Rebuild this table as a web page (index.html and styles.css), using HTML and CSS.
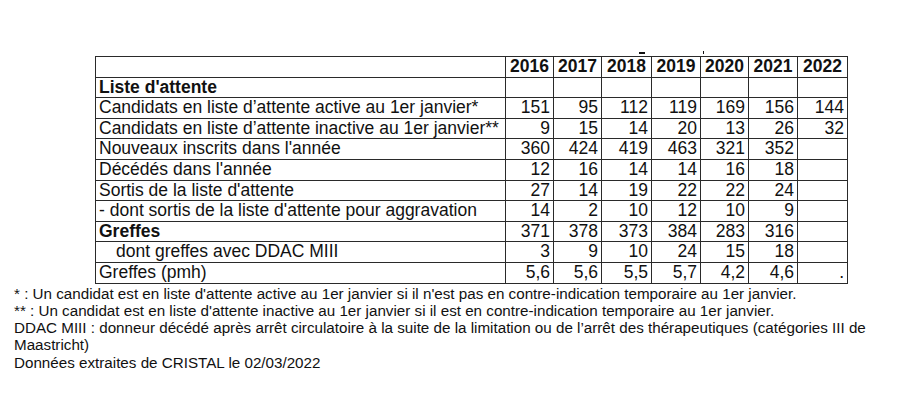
FILE: index.html
```html
<!DOCTYPE html>
<html lang="fr">
<head>
<meta charset="utf-8">
<link rel="stylesheet" href="styles.css">
</head>
<body>
<div class="page">
  <div class="table-wrap">
    <span class="mark mark-a"></span>
    <span class="mark mark-b"></span>
    <table class="data">
      <colgroup>
        <col class="c-label">
        <col class="c-y1"><col class="c-y2"><col class="c-y3"><col class="c-y4"><col class="c-y5"><col class="c-y6"><col class="c-y7">
      </colgroup>
      <tr class="head"><td></td><td>2016</td><td>2017</td><td>2018</td><td>2019</td><td>2020</td><td>2021</td><td>2022</td></tr>
      <tr class="section"><td>Liste d'attente</td><td></td><td></td><td></td><td></td><td></td><td></td><td></td></tr>
      <tr><td>Candidats en liste d’attente active au 1er janvier*</td><td>151</td><td>95</td><td>112</td><td>119</td><td>169</td><td>156</td><td>144</td></tr>
      <tr><td>Candidats en liste d’attente inactive au 1er janvier**</td><td>9</td><td>15</td><td>14</td><td>20</td><td>13</td><td>26</td><td>32</td></tr>
      <tr><td>Nouveaux inscrits dans l'année</td><td>360</td><td>424</td><td>419</td><td>463</td><td>321</td><td>352</td><td></td></tr>
      <tr><td>Décédés dans l'année</td><td>12</td><td>16</td><td>14</td><td>14</td><td>16</td><td>18</td><td></td></tr>
      <tr><td>Sortis de la liste d'attente</td><td>27</td><td>14</td><td>19</td><td>22</td><td>22</td><td>24</td><td></td></tr>
      <tr><td>- dont sortis de la liste d'attente pour aggravation</td><td>14</td><td>2</td><td>10</td><td>12</td><td>10</td><td>9</td><td></td></tr>
      <tr class="section"><td>Greffes</td><td>371</td><td>378</td><td>373</td><td>384</td><td>283</td><td>316</td><td></td></tr>
      <tr><td class="indent">dont greffes avec DDAC MIII</td><td>3</td><td>9</td><td>10</td><td>24</td><td>15</td><td>18</td><td></td></tr>
      <tr><td>Greffes (pmh)</td><td>5,6</td><td>5,6</td><td>5,5</td><td>5,7</td><td>4,2</td><td>4,6</td><td>.</td></tr>
    </table>
  </div>
  <div class="notes">
    <p>* : Un candidat est en liste d'attente active au 1er janvier si il n'est pas en contre-indication temporaire au 1er janvier.</p>
    <p>** : Un candidat est en liste d'attente inactive au 1er janvier si il est en contre-indication temporaire au 1er janvier.</p>
    <p>DDAC MIII : donneur décédé après arrêt circulatoire à la suite de la limitation ou de l’arrêt des thérapeutiques (catégories III de Maastricht)</p>
    <p>Données extraites de CRISTAL le 02/03/2022</p>
  </div>
</div>
</body>
</html>
```

FILE: styles.css
```css
html, body {
  margin: 0;
  padding: 0;
  background: #ffffff;
}
body {
  font-family: "Liberation Sans", Arial, sans-serif;
  color: #111111;
}
.page {
  padding: 56px 0 0 14px;
  width: 872px;
}
.table-wrap {
  position: relative;
  margin-left: 81px;
  width: 752px;
}
.mark {
  position: absolute;
  background: #111111;
}
.mark-a {
  left: 544px;
  top: -4px;
  width: 6px;
  height: 2px;
}
.mark-b {
  left: 608px;
  top: -5px;
  width: 1px;
  height: 3px;
}
.data {
  border-collapse: collapse;
  table-layout: fixed;
  width: 752px;
  font-size: 17.5px;
}
.c-label { width: 410px; }
.c-y1 { width: 48px; }
.c-y2 { width: 48px; }
.c-y3 { width: 50px; }
.c-y4 { width: 49px; }
.c-y5 { width: 48px; }
.c-y6 { width: 49px; }
.c-y7 { width: 50px; }
.data td {
  border: 1px solid #2a2a2a;
  height: 19.6px;
  padding: 0 3px;
  line-height: 19.6px;
  text-align: right;
  white-space: nowrap;
  overflow: hidden;
}
.data td:first-child {
  text-align: left;
}
.data .head td {
  font-weight: bold;
  text-align: center;
  padding: 0;
}
.data .section td:first-child {
  font-weight: bold;
}
.data td.indent {
  padding-left: 20px;
}
.notes {
  font-size: 15.2px;
  line-height: 17.3px;
  margin-top: 1px;
}
.notes p {
  margin: 0;
}
```
